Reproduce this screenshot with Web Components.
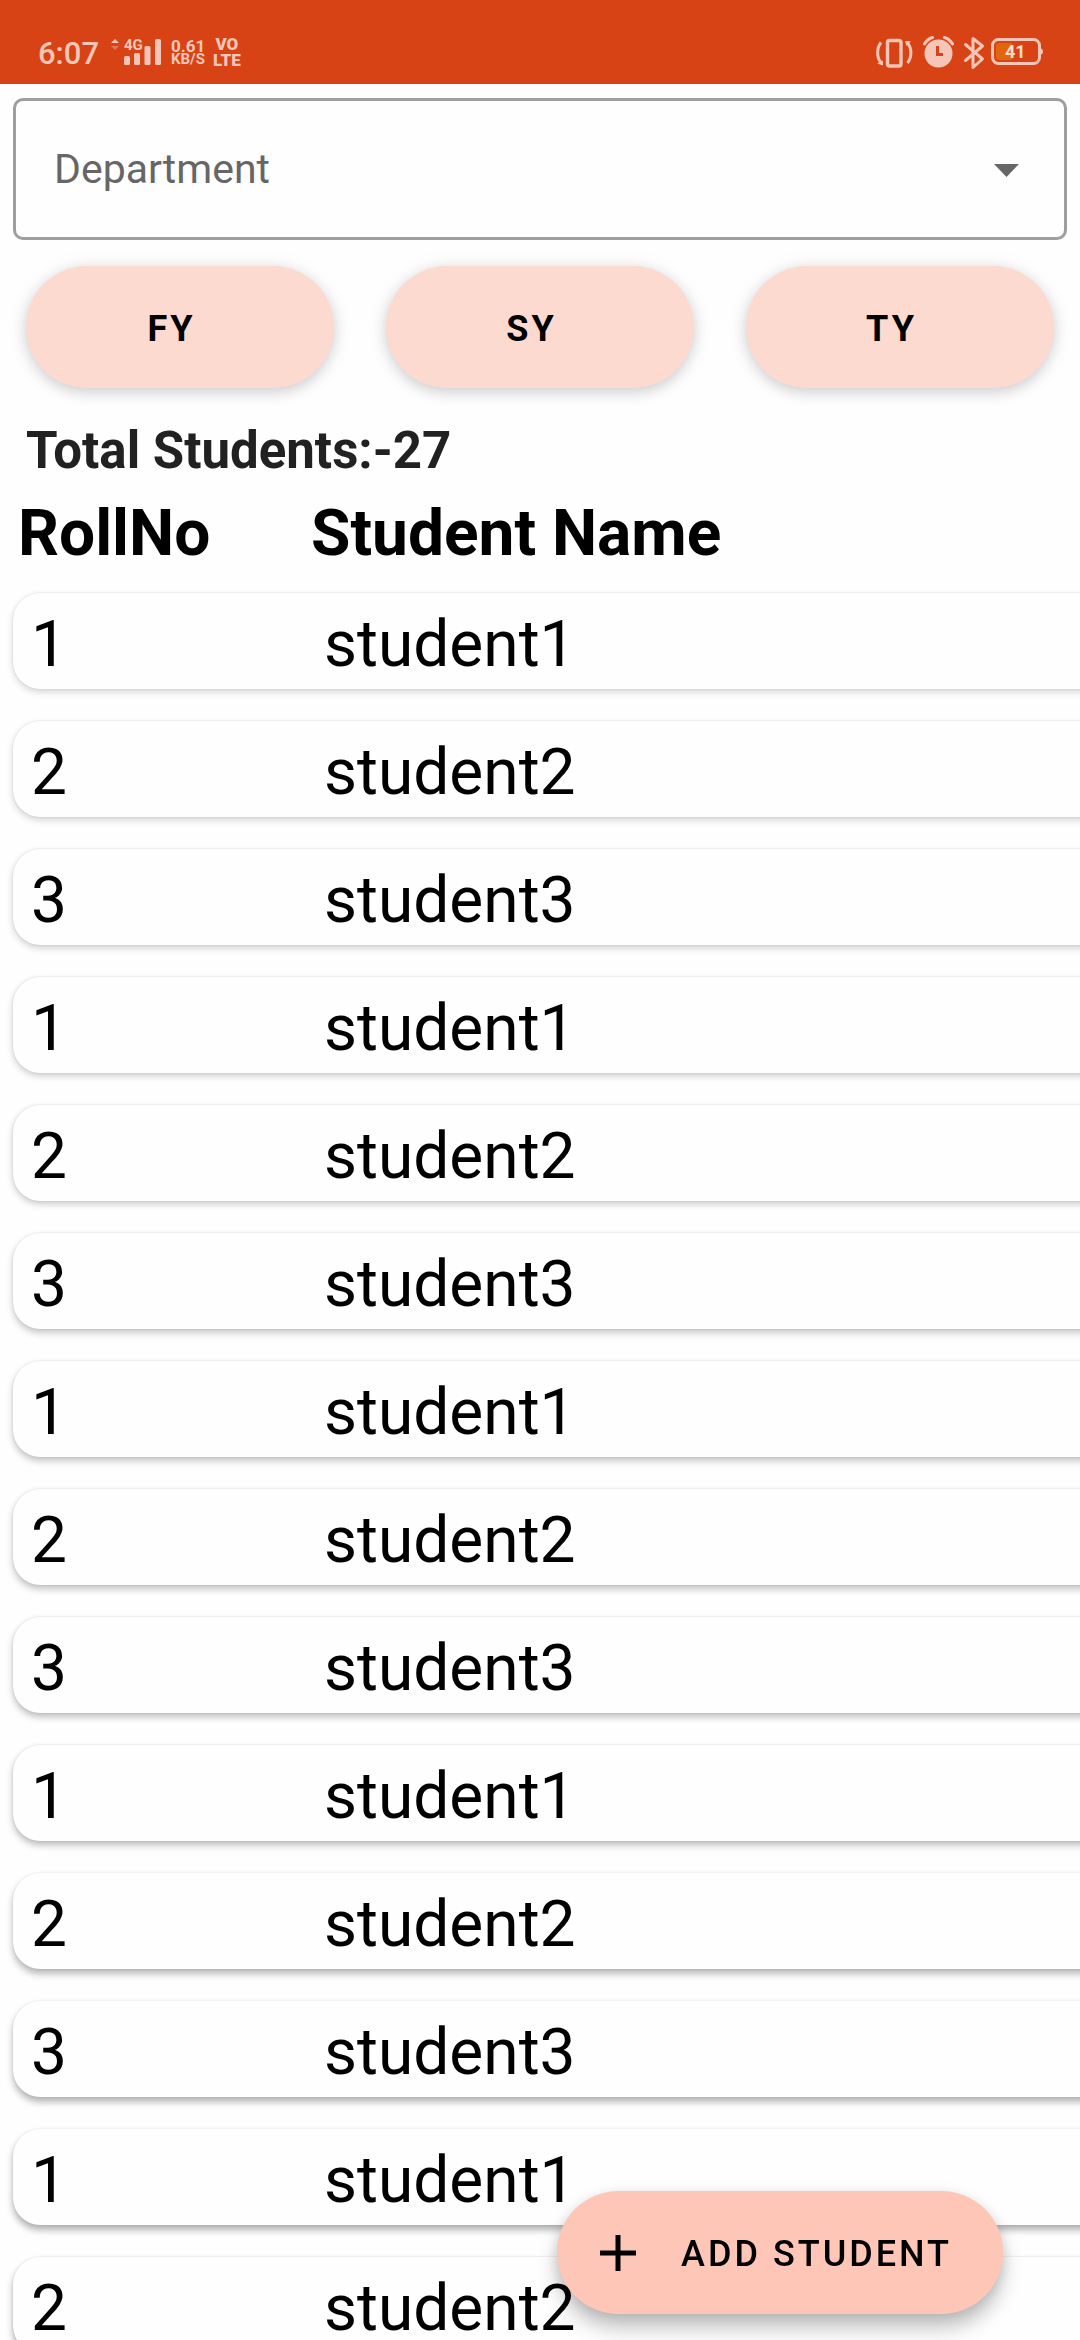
<!DOCTYPE html>
<html lang="en">
<head>
<meta charset="utf-8">
<meta name="viewport" content="width=device-width">
<title>Students</title>
<style>
html,body{margin:0;height:100%}
body{font-family:Roboto,"Noto Sans",sans-serif;background:#fefefe;color:#000;overflow:hidden}
</style>
</head>
<body>
<student-app></student-app>
<script>
const define = (name, html, setup) => customElements.define(name, class extends HTMLElement {
  constructor() {
    super();
    const t = document.createElement('template');
    t.innerHTML = html;
    this.attachShadow({ mode: 'open' }).append(t.content.cloneNode(true));
  }
  connectedCallback() { if (setup) setup(this, this.shadowRoot); }
});

define('status-bar', `
<style>
:host{display:flex;justify-content:space-between;box-sizing:border-box;height:84px;padding:36px 37px 0 38px;background:#d84315;color:#f5c6b8}
.side{display:flex;align-items:flex-start}
svg{display:block;fill:currentColor}
.time{font-size:31px;line-height:36px;font-weight:500;width:62px;margin-right:10px}
.signal,.battery{display:grid}
.signal>*,.battery>*{grid-area:1/1}
.signal span{font-size:15px;line-height:18px;font-weight:700;padding-left:14px}
.pair{display:flex;flex-direction:column;line-height:14px;font-weight:700}
.speed{font-size:17px;width:36px;margin:3px 6px 0 9px}
.speed small{font-size:15px;line-height:12px}
.volte{font-size:17px;font-weight:900;line-height:16px;align-items:center}
.battery{margin-left:6px}
.battery span{font-size:18px;line-height:32px;font-weight:700;color:#fbdccb;padding-left:14px}
</style>
<div class="side">
  <span class="time">6:07</span>
  <div class="signal">
    <svg width="52" height="32" viewBox="110 36 52 32"><path d="M111 43l4-4 4 4z"/><path d="M111 46l4 4 4-4z" opacity=".4"/><rect x="124" y="56" width="6" height="9" rx="1.5"/><rect x="134" y="53" width="6" height="12" rx="1.5"/><rect x="144.500" y="46" width="6" height="19" rx="1.500"/><rect x="155" y="39" width="6" height="26" rx="1.500"/></svg>
    <span>4G</span>
  </div>
  <div class="pair speed"><span>0.61</span><small>KB/S</small></div>
  <div class="pair volte"><span>VO</span><span>LTE</span></div>
</div>
<div class="side">
  <svg width="112" height="34" viewBox="872 35 112 34">
    <rect x="886.500" y="39.500" width="13.500" height="25.500" rx="2" fill="none" stroke="currentColor" stroke-width="3.4"/>
    <path d="M880 41.500c-4.500 5.500-4.500 15 0 20M906.500 62c4.500-5.500 4.500-15 0-20" fill="none" stroke="currentColor" stroke-width="3"/>
    <path d="M876 62.500l6-3v5zM904 40h6l-4.500 5z"/>
    <circle cx="937.500" cy="52.500" r="14"/>
    <path d="M923.500 43q3-5 8-6.500M951.500 43q-3-5-8-6.500" fill="none" stroke="currentColor" stroke-width="3" stroke-linecap="round"/>
    <path d="M936.500 45v8.500h5.500" fill="none" stroke="#d84315" stroke-width="3"/>
    <path d="M964.500 43.500l17 14.500-9.500 8.500v-29l9.500 7.500-17 14.500" fill="none" stroke="currentColor" stroke-width="3" stroke-linejoin="round" stroke-linecap="round"/>
  </svg>
  <div class="battery">
    <svg width="52" height="32" viewBox="990 36 52 32"><rect x="991.500" y="39.500" width="47" height="24" rx="6" fill="none" stroke="currentColor" stroke-width="3"/><path d="M1039 48q3 1 3 3.500t-3 3.500z"/><rect x="995" y="43" width="17" height="17" rx="3" fill="#e0660f"/></svg>
    <span>41</span>
  </div>
</div>`);

define('department-select', `
<style>
:host{display:grid;align-items:center}
select,svg{grid-area:1/1}
select{appearance:none;box-sizing:border-box;width:100%;height:142px;margin:0;padding:0 80px 0 38px;border:3px solid #9e9e9e;border-radius:10px;background:#fefefe;font:400 41px/48px Roboto,sans-serif;color:#666;outline:none}
svg{justify-self:end;margin-right:48px;padding-top:2px;pointer-events:none}
</style>
<select aria-label="Department"><option>Department</option></select>
<svg width="25" height="13" viewBox="0 0 25 13" aria-hidden="true"><path d="M0 0h25L12.500 13z" fill="#666"/></svg>`);

define('year-button', `
<style>
:host{display:block;flex:1}
button{display:block;width:100%;height:122px;border:0;border-radius:61px;padding:3px 17px 0 0;background:#fddad0;color:#000;font:700 36px/42px Roboto,sans-serif;letter-spacing:3px;box-shadow:0 4px 14px rgba(0,0,0,.16),0 2px 24px rgba(0,0,0,.06)}
</style>
<button type="button"><slot></slot></button>`);

define('student-table', `
<style>
:host{display:block}
table,thead,tbody{display:block}
tr{display:flex;font-size:64px;line-height:75px}
th,td{padding:0;text-align:left}
th:first-child,td:first-child{flex:0 0 293px}
thead tr{padding:0 18px;margin-bottom:22px}
th{font-weight:700}
tbody{display:flex;flex-direction:column;gap:32px}
tbody tr{margin:0 -40px 0 13px;padding:14px 18px 7px;border-radius:27px;background:#fefefe;box-shadow:0 var(--dy) 7px rgba(0,0,0,var(--a)),0 0 2px rgba(0,0,0,.12)}
</style>
<table><thead><tr><th scope="col">RollNo</th><th scope="col">Student Name</th></tr></thead><tbody></tbody></table>`,
(host, root) => {
  const body = root.querySelector('tbody');
  body.replaceChildren();
  // Cards lower on the screen cast a deeper shadow.
  for (let i = 0; i < 14; i++) {
    const n = i % 3 + 1, row = body.insertRow();
    row.style.setProperty('--dy', (i < 5 ? 3 : i < 10 ? 4 : 5) + 'px');
    row.style.setProperty('--a', (0.16 + i * 0.012).toFixed(3));
    row.insertCell().textContent = n;
    row.insertCell().textContent = 'student' + n;
  }
});

define('add-button', `
<style>
:host{position:fixed;right:77px;bottom:26px}
button{display:flex;align-items:center;gap:32px;height:123px;border:0;border-radius:62px;padding:0 51px 0 30px;background:#fec6b6;color:#000;font:500 36px/42px Roboto,sans-serif;letter-spacing:3px;white-space:nowrap;box-shadow:0 14px 20px rgba(0,0,0,.24),0 2px 14px rgba(0,0,0,.1)}
span{padding-top:3px}
</style>
<button type="button"><svg width="62" height="62" viewBox="0 0 62 62" aria-hidden="true"><path d="M31 13v36M13 31h36" stroke="#000" stroke-width="5"/></svg><span><slot></slot></span></button>`);

define('student-app', `
<style>
:host{display:flex;flex-direction:column;height:100vh;overflow:hidden}
:host>*{flex-shrink:0}
department-select{margin:14px 13px 0}
.years{display:flex;gap:52px;padding:26px 26px 0}
.total{margin:33px 26px 15px;font-size:51px;line-height:60px;font-weight:700;color:#212121}
</style>
<status-bar></status-bar>
<department-select></department-select>
<div class="years"><year-button>FY</year-button><year-button>SY</year-button><year-button>TY</year-button></div>
<p class="total">Total Students:-27</p>
<student-table></student-table>
<add-button>ADD STUDENT</add-button>`);
</script>
</body>
</html>
